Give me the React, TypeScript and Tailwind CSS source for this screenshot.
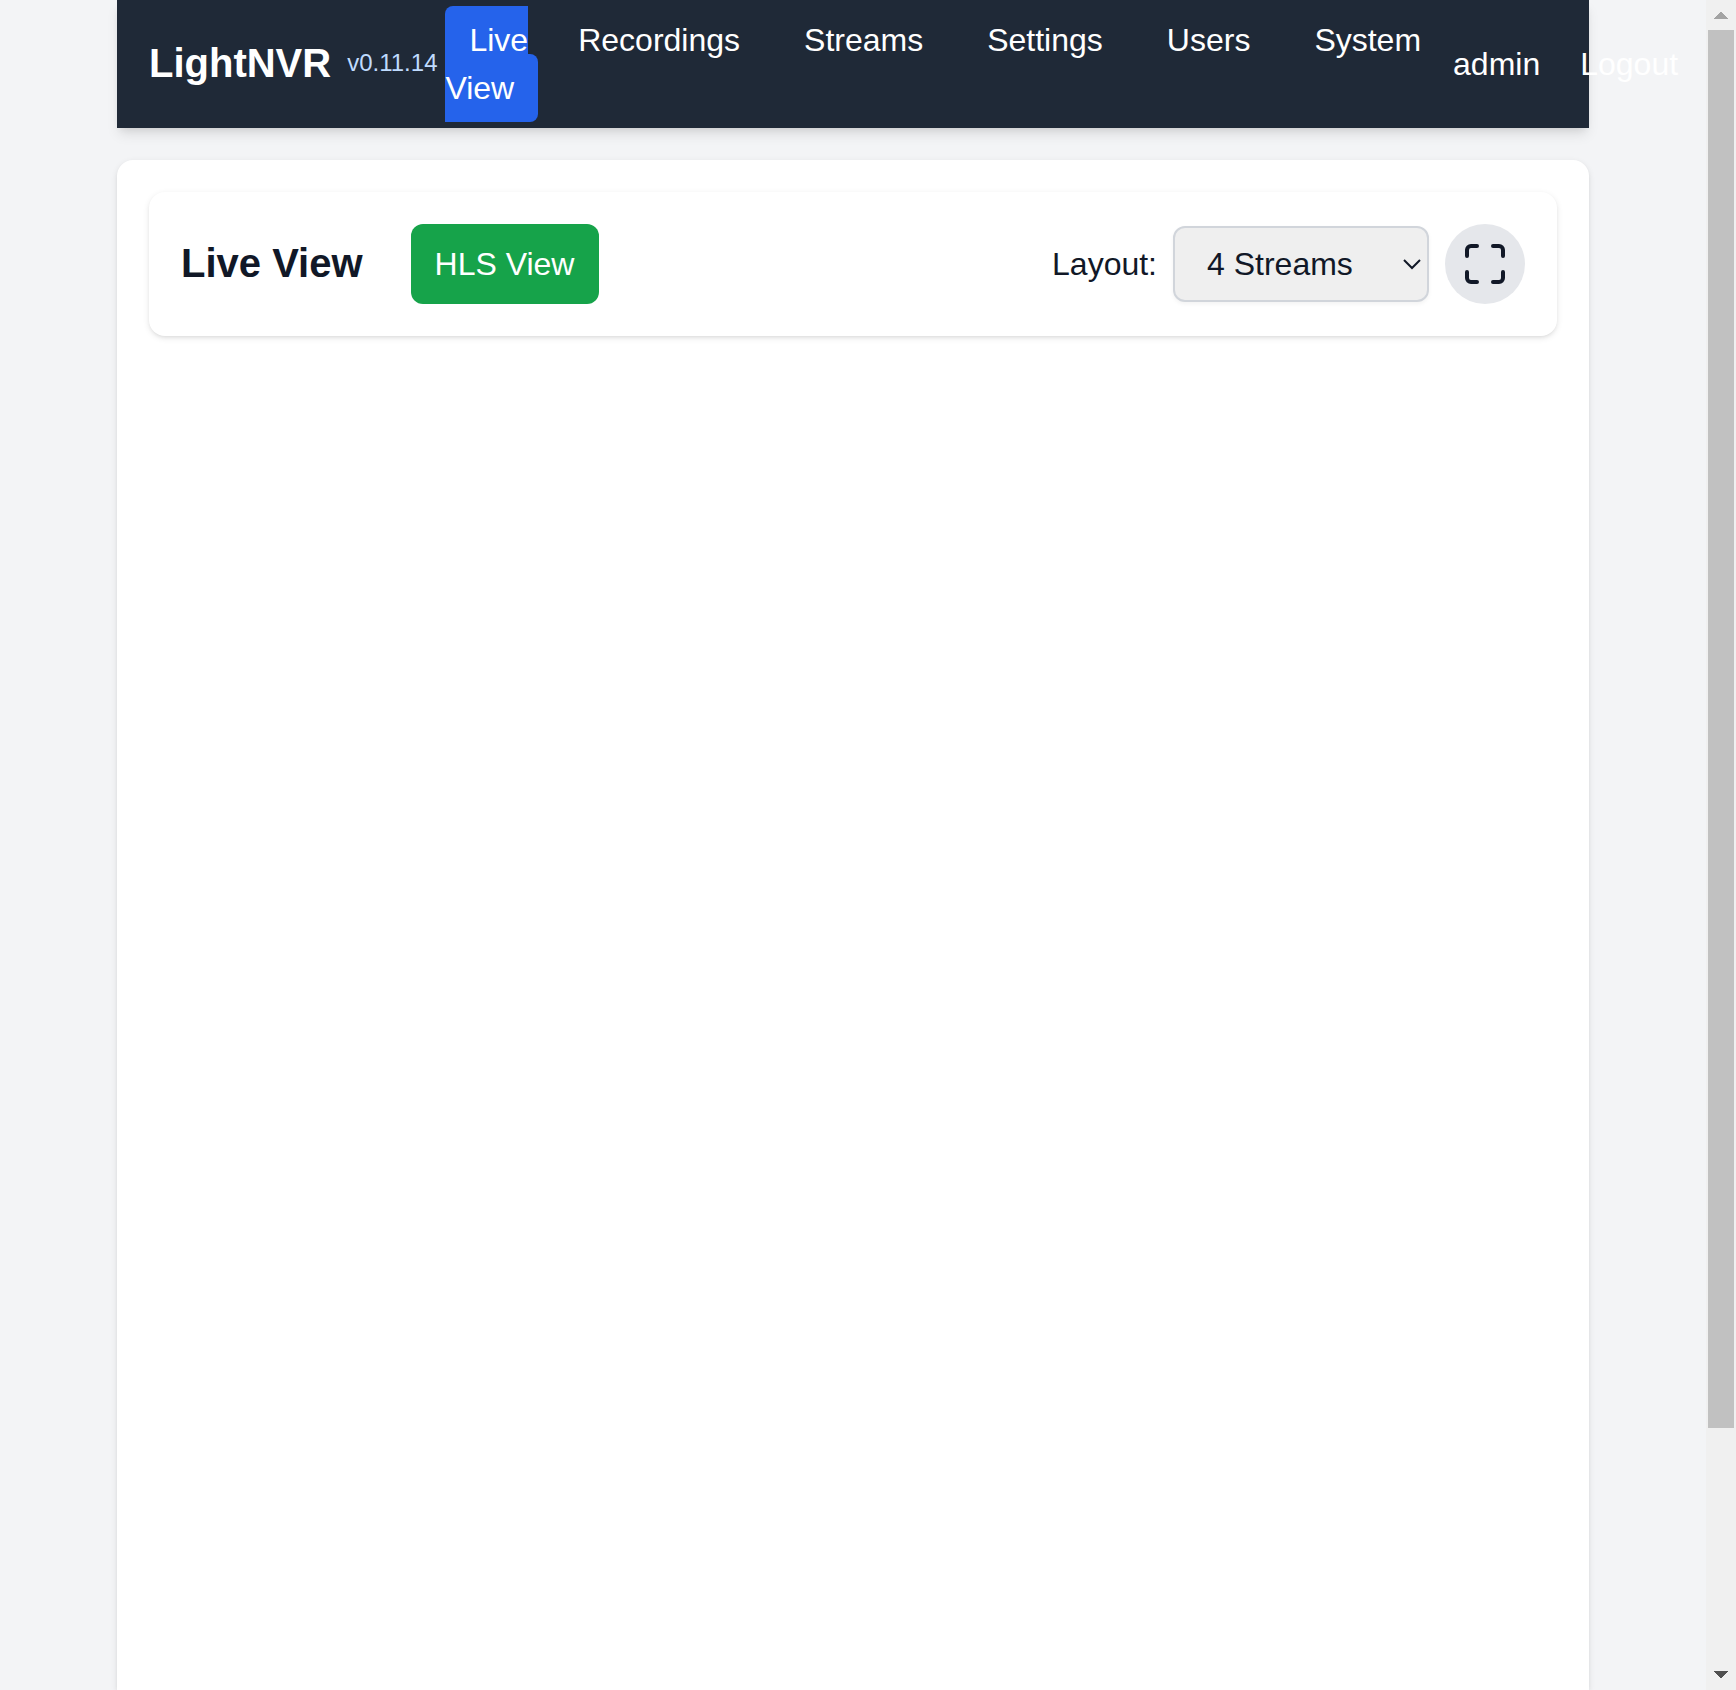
import { useState } from 'react';

const links = ['Recordings', 'Streams', 'Settings', 'Users', 'System'];

function Header() {
  return (
    <header className="flex h-32 items-center bg-[#1f2937] px-8 py-4 text-[32px] leading-[48px] whitespace-nowrap text-white shadow-[0_8px_12px_-2px_rgba(0,0,0,0.1),0_4px_8px_-4px_rgba(0,0,0,0.1)]">
      <div className="mb-0.5 flex w-[296.4px] shrink-0 items-center">
        <h1 className="m-0 text-[40px] leading-[56px] font-bold">LightNVR</h1>
        <span className="ml-4 text-2xl leading-8 text-[#bfdbfe]">v0.11.14</span>
      </div>
      <nav className="shrink-0">
        <ul className="flex">
          <li className="mr-4 w-[92.8px] whitespace-normal">
            <a href="#" className="rounded-lg bg-[#2563eb] px-6 py-4">
              Live View
            </a>
          </li>
          {links.map((label) => (
            <li key={label} className="mr-4 last:mr-0">
              <a href="#" className="rounded-lg px-6 py-4">
                {label}
              </a>
            </li>
          ))}
        </ul>
      </nav>
      <div className="ml-2 flex shrink-0 items-center">
        <span className="mr-4">admin</span>
        <a href="#" className="px-6">
          Logout
        </a>
      </div>
    </header>
  );
}

function LayoutSelect() {
  const [layout, setLayout] = useState('4');
  return (
    <div className="grid">
      <select
        id="layout"
        value={layout}
        onChange={(e) => setLayout(e.target.value)}
        className="col-start-1 row-start-1 h-[76px] w-64 appearance-none rounded-xl border-2 border-[#d1d5db] bg-[#efefef] px-8 text-[32px] leading-[48px] text-[#111827] shadow-[0_2px_4px_0_rgba(0,0,0,0.05)] outline-none"
      >
        <option value="1">1 Stream</option>
        <option value="4">4 Streams</option>
        <option value="6">6 Streams</option>
        <option value="9">9 Streams</option>
        <option value="16">16 Streams</option>
      </select>
      <svg
        className="pointer-events-none col-start-1 row-start-1 mr-2 h-3 w-[18px] self-center justify-self-end"
        viewBox="0 0 18 12"
        fill="none"
        stroke="#111827"
        strokeWidth="2"
      >
        <path d="M1 2l8 8 8-8" />
      </svg>
    </div>
  );
}

function Scrollbar() {
  return (
    <div className="flex w-[30px] shrink-0 flex-col items-center bg-[#f0f0f0]">
      <div className="flex h-[30px] shrink-0 flex-col pt-3">
        <svg width="14" height="7" viewBox="0 0 14 7">
          <path d="M6 0h2v1h1v1h1v1h1v1h1v1h1v1h1v1H0V6h1V5h1V4h1V3h1V2h1V1h1z" fill="#a3a3a3" />
        </svg>
      </div>
      <div className="h-[1398px] w-[26px] shrink-0 bg-[#c1c1c1]" />
      <svg className="mt-auto mb-3 shrink-0" width="14" height="7" viewBox="0 0 14 7">
        <path d="M0 0h14v1h-1v1h-1v1h-1v1h-1v1H9v1H8v1H6V6H5V5H4V4H3V3H2V2H1V1H0z" fill="#505050" />
      </svg>
    </div>
  );
}

export default function App() {
  return (
    <div className="flex h-[1690px] w-[1736px] overflow-hidden bg-[#f3f4f6] font-['Liberation_Sans',Arial,sans-serif] text-[#111827]">
      <div className="flex min-w-0 flex-1 flex-col pr-[117px] pl-[117px]">
        <Header />
        <main className="mt-8 flex-1 rounded-t-2xl bg-white p-8 shadow-[0_2px_6px_0_rgba(0,0,0,0.1),0_2px_4px_-2px_rgba(0,0,0,0.1)]">
          <section className="flex h-36 items-center justify-between rounded-2xl bg-white p-8 shadow-[0_2px_6px_0_rgba(0,0,0,0.1),0_2px_4px_-2px_rgba(0,0,0,0.1)]">
            <div className="flex items-center">
              <h2 className="mb-0.5 w-[230px] text-[40px] leading-[56px] font-bold whitespace-nowrap">Live View</h2>
              <button className="h-20 w-[188px] rounded-xl bg-[#16a34a] pr-px text-[32px] leading-[48px] whitespace-nowrap text-white">
                HLS View
              </button>
            </div>
            <div className="flex items-center gap-4">
              <label htmlFor="layout" className="text-[32px] leading-[48px]">
                Layout:
              </label>
              <LayoutSelect />
              <button aria-label="Toggle fullscreen" className="flex size-20 items-center justify-center rounded-full bg-[#e5e7eb]">
                <svg
                  className="size-12"
                  viewBox="0 0 24 24"
                  fill="none"
                  stroke="currentColor"
                  strokeWidth="2"
                  strokeLinecap="round"
                  strokeLinejoin="round"
                >
                  <path d="M8 3H5a2 2 0 0 0-2 2v3m18 0V5a2 2 0 0 0-2-2h-3m0 18h3a2 2 0 0 0 2-2v-3M3 16v3a2 2 0 0 0 2 2h3" />
                </svg>
              </button>
            </div>
          </section>
        </main>
      </div>
      <Scrollbar />
    </div>
  );
}
